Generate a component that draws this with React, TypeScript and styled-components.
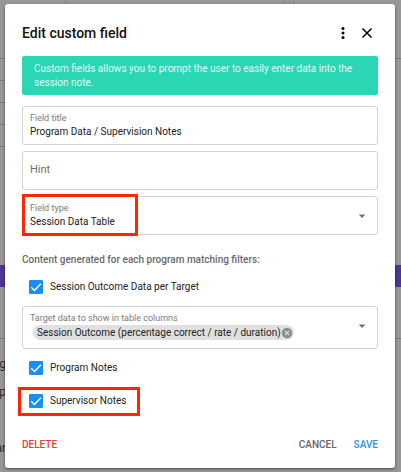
import React, { useState } from "react";
import styled, { createGlobalStyle, css } from "styled-components";

const GlobalStyle = createGlobalStyle`
  *, *::after { box-sizing: border-box; }
  body {
    margin: 0;
    background: #979797;
    font-family: Roboto, "Liberation Sans", sans-serif;
    color: #222;
  }
  button, input, select { font: inherit; color: inherit; }
`;

const Page = styled.div`
  position: relative;
  min-height: 100vh;
  overflow: hidden;
`;

const Backdrop = styled.div`
  position: absolute;
  inset: 0;
  display: flex;
  flex-direction: column;
  font-size: 12px;
  line-height: 16px;
  color: #2c2c2c;
`;

const BackdropColumns = styled.div`
  display: grid;
  grid-template-columns: 66px 1fr 10px 107px;
  height: 59px;
  border-bottom: 1px solid #7c7c7c;

  > * { border-right: 1px solid #858585; }
  > :last-child { border-right: 0; }
`;

const BackdropRow = styled.div`
  width: 50%;
  height: 22px;
  border-bottom: 1px solid #7c7c7c;
`;

const BackdropSpace = styled.div`
  flex: 1;
`;

const PurpleBand = styled.div`
  height: 22px;
  background: #4d3592;
`;

const BackdropRule = styled.div`
  height: 52px;
  border-bottom: 1px solid #7c7c7c;
`;

const BackdropNotes = styled.div`
  height: 133px;
  padding-top: 17px;
  width: 6px;
  display: flex;
  flex-direction: column;
  align-items: flex-end;
  gap: 12px;
  white-space: nowrap;
`;

const BackdropLast = styled.span`
  padding-top: 28px;
`;

const Dialog = styled.form`
  position: relative;
  margin: 4px 6px 4px 5px;
  padding: 14px 17px 15px;
  background: #fff;
  border-radius: 3px;
  box-shadow: 0 1px 3px rgba(0, 0, 0, 0.5);
`;

const Header = styled.header`
  display: flex;
  align-items: center;
  height: 30px;
  gap: 8px;
`;

const Title = styled.h1`
  flex: 1;
  margin: 0;
  font-size: 14px;
  line-height: 20px;
  font-weight: 500;
  color: #111;
`;

const IconButton = styled.button`
  display: flex;
  width: 16px;
  height: 16px;
  padding: 0;
  border: 0;
  background: none;
  color: #000;
  align-items: center;
  justify-content: center;
`;

const HeaderActions = styled.div`
  display: flex;
  gap: 8px;
  padding-right: 3px;
`;

const Notice = styled.p`
  margin: 8px 0 11px;
  padding: 6px 12px 5px;
  border-radius: 2px;
  background: #2ad6b4;
  color: #e4fbf6;
  font-size: 10px;
  line-height: 14px;
`;

const Fields = styled.div`
  display: flex;
  flex-direction: column;
  gap: 6px;
`;

const highlight = css`
  &::after {
    content: "";
    position: absolute;
    border: 3px solid #ff2600;
    pointer-events: none;
  }
`;

const FieldBox = styled.div<{ $marked?: boolean }>`
  position: relative;
  display: flex;
  flex-direction: column;
  justify-content: center;
  min-height: 39px;
  padding: 0 7px 1px;
  border: 1px solid #d2d2d2;
  border-radius: 3px;

  ${(p) => p.$marked && css`
    ${highlight}
    &::after { inset: -3px auto -2px -1px; width: 116px; }
  `}
`;

const FieldLabel = styled.label`
  font-size: 9px;
  line-height: 14px;
  color: #7b7b7b;
`;

const TextInput = styled.input`
  width: 100%;
  height: 14px;
  padding: 0;
  border: 0;
  outline: 0;
  background: none;
  font-size: 10px;
  line-height: 14px;

  &::placeholder { color: #6f6f6f; opacity: 1; font-size: 11px; }
`;

const SelectInput = styled.select`
  appearance: none;
  width: 100%;
  height: 14px;
  padding: 0;
  border: 0;
  outline: 0;
  background: none;
  font-size: 10px;
  line-height: 14px;
`;

const CaretSlot = styled.span`
  position: absolute;
  top: 0;
  right: 7px;
  height: 37px;
  display: flex;
  align-items: center;
  color: #717171;
  pointer-events: none;
`;

const Subheading = styled.h2`
  margin: 18px 0 13px;
  font-size: 10px;
  line-height: 14px;
  font-weight: 500;
  color: #6a6a6a;
`;

const CheckLabel = styled.label<{ $marked?: boolean }>`
  position: relative;
  display: flex;
  align-items: center;
  width: fit-content;
  height: 14px;
  gap: 7px;
  margin-left: 7px;
  font-size: 10px;
  line-height: 14px;

  ${(p) => p.$marked && css`
    ${highlight}
    &::after { inset: -7px auto -8px -11px; width: 122px; }
  `}
`;

const CheckSquare = styled.span`
  display: grid;
  width: 14px;
  height: 14px;

  > * { grid-area: 1 / 1; }
`;

const CheckInput = styled.input`
  appearance: none;
  width: 14px;
  height: 14px;
  margin: 0;
  border: 1px solid #6a6a6a;
  border-radius: 1px;

  &:checked { background: #1890f3; border-color: #1890f3; }
  & + svg { visibility: hidden; pointer-events: none; }
  &:checked + svg { visibility: visible; }
`;

const ChipField = styled(FieldBox)`
  min-height: 43px;
  margin: 12px 0;
  padding-bottom: 4px;
`;

const Chip = styled.span`
  display: flex;
  align-items: center;
  width: fit-content;
  height: 15px;
  margin-left: 3px;
  padding: 0 1px 0 4px;
  border-radius: 8px;
  background: #e0e0e0;
  font-size: 10px;
  line-height: 14px;
  white-space: nowrap;
`;

const ChipRemove = styled.button`
  display: flex;
  width: 12px;
  height: 12px;
  padding: 0;
  border: 0;
  background: none;
`;

const Checks = styled.div`
  display: flex;
  flex-direction: column;
  gap: 19px;
`;

const Footer = styled.footer`
  display: flex;
  align-items: center;
  gap: 17px;
  margin-top: 29px;
`;

const TextButton = styled.button<{ $color: string; $push?: boolean }>`
  padding: 0;
  border: 0;
  background: none;
  font-size: 10px;
  line-height: 16px;
  font-weight: 500;
  color: ${(p) => p.$color};
  margin-right: ${(p) => (p.$push ? "auto" : "0")};
`;

function Caret() {
  return (
    <CaretSlot>
      <svg width="16" height="16" viewBox="0 0 16 16" aria-hidden="true">
        <path d="M4.7 6.5h6.6L8 10z" fill="currentColor" />
      </svg>
    </CaretSlot>
  );
}

function Check({ label, marked }: { label: string; marked?: boolean }) {
  return (
    <CheckLabel $marked={marked}>
      <CheckSquare>
        <CheckInput type="checkbox" defaultChecked />
        <svg width="14" height="14" viewBox="0 0 14 14" aria-hidden="true">
          <path d="M2.3 7.3 5.4 10.4 11.9 3.7" fill="none" stroke="#fff" strokeWidth="1.4" />
        </svg>
      </CheckSquare>
      {label}
    </CheckLabel>
  );
}

export default function App() {
  const [chips, setChips] = useState(["Session Outcome (percentage correct / rate / duration)"]);

  return (
    <Page>
      <GlobalStyle />
      <Backdrop aria-hidden="true">
        <BackdropColumns><i /><i /><i /><i /></BackdropColumns>
        <BackdropRow />
        <BackdropRow />
        <BackdropRow />
        <BackdropRow />
        <BackdropSpace />
        <PurpleBand />
        <BackdropRule />
        <BackdropNotes>
          <span>ng</span>
          <span>p</span>
          <BackdropLast>ar</BackdropLast>
        </BackdropNotes>
      </Backdrop>

      <Dialog role="dialog" aria-labelledby="dialog-title" onSubmit={(e) => e.preventDefault()}>
        <Header>
          <Title id="dialog-title">Edit custom field</Title>
          <HeaderActions>
            <IconButton type="button" aria-label="More options">
              <svg width="16" height="16" viewBox="0 0 16 16">
                <circle cx="8" cy="3.5" r="1.5" />
                <circle cx="8" cy="8" r="1.5" />
                <circle cx="8" cy="12.5" r="1.5" />
              </svg>
            </IconButton>
            <IconButton type="button" aria-label="Close">
              <svg width="16" height="16" viewBox="0 0 16 16">
                <path d="M3.5 3.5l9 9M12.5 3.5l-9 9" stroke="currentColor" strokeWidth="1.5" />
              </svg>
            </IconButton>
          </HeaderActions>
        </Header>

        <Notice>
          Custom fields allows you to prompt the user to easily enter data into the session note.
        </Notice>

        <Fields>
          <FieldBox>
            <FieldLabel htmlFor="field-title">Field title</FieldLabel>
            <TextInput id="field-title" defaultValue="Program Data / Supervision Notes" />
          </FieldBox>
          <FieldBox>
            <TextInput aria-label="Hint" placeholder="Hint" />
          </FieldBox>
          <FieldBox $marked>
            <FieldLabel htmlFor="field-type">Field type</FieldLabel>
            <SelectInput id="field-type" defaultValue="table">
              <option value="table">Session Data Table</option>
            </SelectInput>
            <Caret />
          </FieldBox>
        </Fields>

        <Subheading>Content generated for each program matching filters:</Subheading>
        <Check label="Session Outcome Data per Target" />

        <ChipField role="group" aria-labelledby="columns-label">
          <FieldLabel as="span" id="columns-label">Target data to show in table columns</FieldLabel>
          {chips.map((chip) => (
            <Chip key={chip}>
              {chip}
              <ChipRemove
                type="button"
                aria-label={`Remove ${chip}`}
                onClick={() => setChips(chips.filter((c) => c !== chip))}
              >
                <svg width="12" height="12" viewBox="0 0 12 12">
                  <circle cx="6" cy="6" r="5.2" fill="#8c8c8c" />
                  <path d="M4 4l4 4M8 4l-4 4" stroke="#e0e0e0" strokeWidth="1.1" />
                </svg>
              </ChipRemove>
            </Chip>
          ))}
          <Caret />
        </ChipField>

        <Checks>
          <Check label="Program Notes" />
          <Check label="Supervisor Notes" marked />
        </Checks>

        <Footer>
          <TextButton type="button" $color="#ef3b36" $push>DELETE</TextButton>
          <TextButton type="button" $color="#666">CANCEL</TextButton>
          <TextButton type="submit" $color="#2a94f0">SAVE</TextButton>
        </Footer>
      </Dialog>
    </Page>
  );
}
